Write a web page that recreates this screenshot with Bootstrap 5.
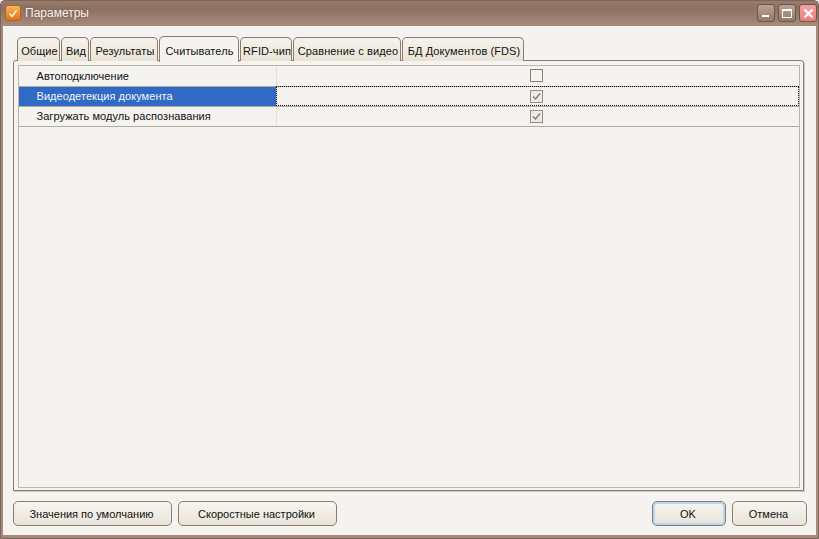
<!DOCTYPE html>
<html lang="ru"><head><meta charset="utf-8"><title>Параметры</title>
<link rel="stylesheet" href="https://cdn.jsdelivr.net/npm/bootstrap@5.3.0/dist/css/bootstrap.min.css">
<style>
html,body{height:100%;margin:0;overflow:hidden}
body{font-family:"Liberation Sans",Arial,sans-serif;font-size:11px;color:#111;background:#f5f3ef}
.win-shell{width:819px;height:539px;display:flex;flex-direction:column;background:#a58a79;border:1px solid #7d6557;border-radius:5px 5px 0 0;padding:0 2px 3px 2px}
.win-title{height:25px;flex:none;background:linear-gradient(180deg,#987b6b 0,#8d7161 30%,#a68b7a 100%);margin:0 -2px;padding:0 1px 1px 4px;color:#f7f2ee}
.win-title-text{font-size:12px;margin-left:4px;text-shadow:0 0 3px #6d5546}
.app-logo{width:16px;height:16px;border-radius:3px;background:linear-gradient(180deg,#f9b55c,#e67210);border:1px solid #b0622b;display:flex;align-items:center;justify-content:center}
.cap-btn{width:18px;height:18px;border-radius:3px;border:1px solid #6e5648;background:linear-gradient(180deg,#b9a396,#93796a);margin-left:3px;padding:0;display:flex;align-items:center;justify-content:center}
.cap-close{background:linear-gradient(180deg,#f8a0a0,#ee7b7b)}
.win-body{flex:1;background:#f5f3ef;display:flex;flex-direction:column;padding:10px 12px 9px 10px;min-height:0}
.tab-strip.nav{flex-wrap:nowrap;gap:1px;padding-left:4px;border:0;height:25px;margin-bottom:-1px;position:relative;z-index:1;align-items:flex-end}
.tab-strip .nav-link{font-size:11px;line-height:14px;letter-spacing:.1px;color:#111;border:1px solid #8f7a6c;border-bottom:0;border-radius:5px 5px 0 0;height:24px;padding:6px 0 0 2px;margin:0;background:linear-gradient(180deg,#f6f3ec,#e9e3d6);text-align:center;white-space:nowrap}
.tab-strip .nav-link.active{background:#f5f3ef;height:26px;padding:7px 0 0 1px;color:#111;border-color:#8f7a6c;margin-bottom:-1px;position:relative}
.tab-panel{flex:1;border:1px solid #8f7a6c;border-radius:3px 3px 0 0;box-shadow:1px 1px 0 #cfc9c0;padding:4px 3px 2px 4px;min-height:0;background:#f5f3ef}
.grid-box{height:100%;border:1px solid #bfb5aa;background:#f5f3ef}
.prop-table{margin:0;table-layout:fixed;width:100%;--bs-table-bg:transparent;--bs-table-color:#111;color:#111}
.prop-table td{height:20px;padding:0;font-size:11px;line-height:18px;letter-spacing:.05px;border:0;border-bottom:1px solid #b5a99e;vertical-align:middle}
.prop-name{width:257px;padding-left:17.5px!important;border-right:1px solid #e6e1da!important}
.prop-sel{background:#316ac5!important;color:#f2f5fb!important;--bs-table-color-state:#f2f5fb;--bs-table-bg-state:#316ac5}
.prop-focus{outline:1px dotted #111;outline-offset:-1px}
.chk{width:13px;height:13px;border:1px solid #8f7a6c;margin:0 auto;display:block;background:#f5f3ef;position:relative;left:-1px}
.chk-on{background:#efebe4;border-color:#9c8c7b}
.foot-row{margin:10px -3px 0 0;height:25px;flex:none;gap:6px}
.foot-btn.btn{font-size:11px;line-height:14px;color:#111;border:1px solid #8f7a6c;border-radius:5px;height:25px;padding:0 2px 0 0;background:linear-gradient(180deg,#f7f5f0,#e9e4d8)}
.w-a{width:159px}.w-o{width:74px;box-shadow:inset 0 0 0 2px #b5d6f5}.w-c{width:75px}
</style></head><body>
<div class="win-shell">
 <div class="win-title d-flex align-items-center">
  <span class="app-logo"><svg width="10" height="9" viewBox="0 0 10 9"><path d="M1.5 4.5 4 7.5 8.5 1.5" fill="none" stroke="#fdf3df" stroke-width="1.6"/></svg></span>
  <span class="win-title-text flex-grow-1">Параметры</span>
  <button class="cap-btn"><svg width="10" height="10" viewBox="0 0 10 10"><rect x="1" y="7" width="7" height="2" fill="#fff"/></svg></button>
  <button class="cap-btn"><svg width="12" height="11" viewBox="0 0 12 11"><rect x="1.5" y="1.5" width="9" height="8" fill="none" stroke="#fff"/><rect x="1" y="1" width="10" height="2" fill="#fff"/></svg></button>
  <button class="cap-btn cap-close"><svg width="11" height="11" viewBox="0 0 11 11"><path d="M1.5 1.5 9.5 9.5M9.5 1.5 1.5 9.5" stroke="#fff" stroke-width="2.4"/></svg></button>
 </div>
 <div class="win-body">
  <ul class="nav nav-tabs tab-strip">
   <li class="nav-item"><a class="nav-link" style="width:43px">Общие</a></li>
   <li class="nav-item"><a class="nav-link" style="width:28px">Вид</a></li>
   <li class="nav-item"><a class="nav-link" style="width:68px">Результаты</a></li>
   <li class="nav-item"><a class="nav-link active" style="width:80px">Считыватель</a></li>
   <li class="nav-item"><a class="nav-link" style="width:52px">RFID-чип</a></li>
   <li class="nav-item"><a class="nav-link" style="width:108px">Сравнение с видео</a></li>
   <li class="nav-item"><a class="nav-link" style="width:122px">БД Документов (FDS)</a></li>
  </ul>
  <div class="tab-panel">
   <div class="grid-box">
    <table class="table prop-table"><tbody>
     <tr><td class="prop-name">Автоподключение</td><td><span class="chk"></span></td></tr>
     <tr><td class="prop-name prop-sel">Видеодетекция документа</td><td class="prop-focus"><span class="chk chk-on"><svg class="d-block" width="11" height="11" viewBox="0 0 11 11"><path d="M2 5.5 4.5 8 9 2.5" fill="none" stroke="#85776b" stroke-width="1.3"/></svg></span></td></tr>
     <tr><td class="prop-name">Загружать модуль распознавания</td><td><span class="chk chk-on"><svg class="d-block" width="11" height="11" viewBox="0 0 11 11"><path d="M2 5.5 4.5 8 9 2.5" fill="none" stroke="#85776b" stroke-width="1.3"/></svg></span></td></tr>
    </tbody></table>
   </div>
  </div>
  <div class="foot-row d-flex">
   <button class="btn foot-btn w-a">Значения по умолчанию</button>
   <button class="btn foot-btn w-a">Скоростные настройки</button>
   <span class="flex-grow-1"></span>
   <button class="btn foot-btn w-o">OK</button>
   <button class="btn foot-btn w-c">Отмена</button>
  </div>
 </div>
</div>
<script src="https://cdn.jsdelivr.net/npm/bootstrap@5.3.0/dist/js/bootstrap.bundle.min.js"></script>
</body></html>
